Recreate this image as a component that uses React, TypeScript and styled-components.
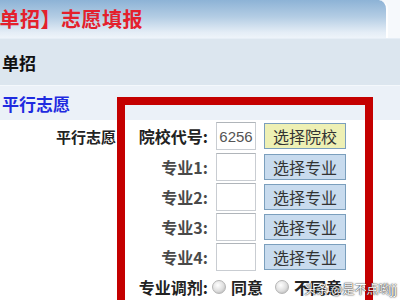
import styled, { createGlobalStyle } from 'styled-components';

const GlobalStyle = createGlobalStyle`
  html, body {
    margin: 0;
    padding: 0;
    background: #ffffff;
  }
  body {
    width: 400px;
    height: 300px;
    overflow: hidden;
    font-family: "Noto Sans CJK SC", "DejaVu Sans", sans-serif;
  }
`;

const Page = styled.div`
  position: relative;
  width: 400px;
  height: 300px;
  overflow: hidden;
`;

const Header = styled.div`
  display: flex;
  height: 38px;
  background: #f6f9fc;
`;

const HeaderTab = styled.div`
  flex: 0 0 386px;
  display: flex;
  align-items: center;
  overflow: hidden;
  border-top-right-radius: 9px;
  background: linear-gradient(180deg, #8db3d6 0%, #b4cde4 45%, #e4edf6 85%, #eef4fa 100%);
  border-right: 2px solid #ffffff;
`;

const Title = styled.h1`
  margin: 0 0 0 -21px;
  font-size: 20px;
  font-weight: 700;
  color: #e4202c;
  letter-spacing: 0.5px;
  line-height: 1;
  white-space: nowrap;
`;

interface BandProps {
  $tone: 'dark' | 'light';
  $height: number;
}

const Band = styled.div<BandProps>`
  display: flex;
  align-items: center;
  height: ${p => p.$height}px;
  padding-left: 2px;
  background: ${p => (p.$tone === 'dark' ? '#dce6ef' : '#ebf1f8')};
  border-top: 1px solid ${p => (p.$tone === 'dark' ? '#e6eef6' : '#f4f8fc')};
  box-sizing: border-box;
`;

const BandText = styled.span<{ $color: string }>`
  font-size: 17px;
  font-weight: 700;
  color: ${p => p.$color};
  line-height: 1;
`;

const Form = styled.div`
  display: grid;
  grid-template-columns: 117px 93px 50px 90px;
  grid-template-rows: 32px repeat(5, 30px);
  align-items: center;
`;

const GroupLabel = styled.div`
  text-align: right;
  padding-right: 1px;
  font-size: 15px;
  font-weight: 700;
  color: #222;
`;

const FieldLabel = styled.div<{ $strong?: boolean }>`
  grid-column: 2;
  text-align: right;
  padding-right: 2px;
  font-size: 16px;
  font-weight: 700;
  color: ${p => (p.$strong ? '#222' : '#4a4a4a')};
  white-space: nowrap;
`;

const CodeInput = styled.div`
  margin-left: 6px;
  width: 40px;
  height: 28px;
  box-sizing: border-box;
  border: 1px solid #c9cdd2;
  border-top-color: #b0b5ba;
  background: #ffffff;
  display: flex;
  align-items: center;
  justify-content: center;
  font-family: "Liberation Sans", sans-serif;
  font-size: 15px;
  color: #555;
  overflow: hidden;
`;

const PickButton = styled.div<{ $kind: 'school' | 'major' }>`
  margin-left: 4px;
  width: 82px;
  height: 26px;
  box-sizing: border-box;
  border: 1px solid #7b9fbd;
  background: ${p => (p.$kind === 'school' ? '#eef0b4' : '#c8dbee')};
  display: flex;
  align-items: center;
  justify-content: center;
  font-size: 16px;
  color: #333;
`;

const ChoiceRow = styled.div`
  grid-column: 3 / span 3;
  display: flex;
  align-items: center;
  margin-left: 2px;
`;

const Radio = styled.span`
  width: 12px;
  height: 12px;
  border-radius: 50%;
  background: radial-gradient(circle at 40% 35%, #ffffff 0%, #dedede 55%, #a9a9a9 100%);
  border: 1px solid #b5b5b5;
  margin-right: 5px;
`;

const ChoiceText = styled.span`
  font-size: 16px;
  font-weight: 700;
  color: #222;
  margin-right: 12px;
`;

const Highlight = styled.div`
  position: absolute;
  left: 117px;
  top: 97px;
  width: 256px;
  height: 240px;
  box-sizing: border-box;
  border: 8px solid #c40000;
  pointer-events: none;
`;

const Watermark = styled.div`
  position: absolute;
  right: 3px;
  bottom: 3px;
  font-size: 12px;
  color: #ffffff;
  text-shadow: 0 0 2px #333, 0 0 1px #000;
`;

const majors = ['专业1:', '专业2:', '专业3:', '专业4:'];

const App = () => {
  return (
    <Page>
      <GlobalStyle />
      <Header>
        <HeaderTab>
          <Title>【单招】志愿填报</Title>
        </HeaderTab>
      </Header>
      <Band $tone="dark" $height={47}>
        <BandText $color="#111">单招</BandText>
      </Band>
      <Band $tone="light" $height={35}>
        <BandText $color="#1f2be0">平行志愿</BandText>
      </Band>

      <Form>
        <GroupLabel>平行志愿</GroupLabel>
        <FieldLabel $strong>院校代号:</FieldLabel>
        <CodeInput>6256</CodeInput>
        <PickButton $kind="school">选择院校</PickButton>

        {majors.map(m => (
          <>
            <FieldLabel key={m}>{m}</FieldLabel>
            <CodeInput />
            <PickButton $kind="major">选择专业</PickButton>
          </>
        ))}

        <FieldLabel $strong>专业调剂:</FieldLabel>
        <ChoiceRow>
          <Radio />
          <ChoiceText>同意</ChoiceText>
          <Radio />
          <ChoiceText>不同意</ChoiceText>
        </ChoiceRow>
      </Form>

      <Highlight />
      <Watermark>头条 @是不点哟jj</Watermark>
    </Page>
  );
};

export default App;
